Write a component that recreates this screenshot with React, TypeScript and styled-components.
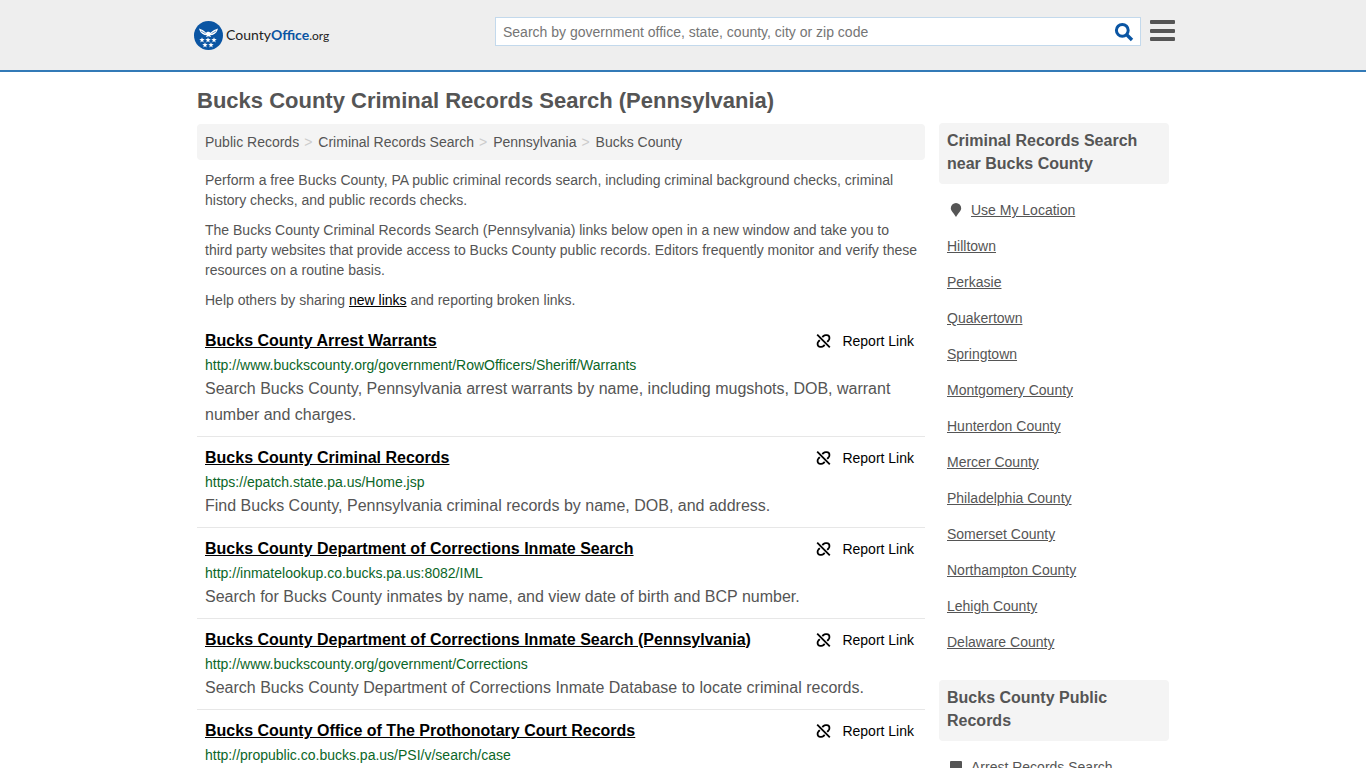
import React from "react";
import styled, { createGlobalStyle } from "styled-components";

const GlobalStyle = createGlobalStyle`
  *, *::before, *::after { box-sizing: border-box; }
  html { overflow-x: hidden; }
  body {
    margin: 0;
    background: #fff;
    color: #555;
    font-family: "Liberation Sans", Arial, Helvetica, sans-serif;
    font-size: 14px;
    line-height: 20px;
  }
  h1, h2, h3, p, ul, ol { margin: 0; padding: 0; }
  ul, ol { list-style: none; }
  a { color: inherit; }
`;

const Header = styled.header`
  background: #eee;
  border-bottom: 2px solid #337ab7;
`;

const HeaderInner = styled.div`
  display: flex;
  align-items: center;
  max-width: 986px;
  height: 70px;
  margin: 0 auto;
  padding: 0 0 8px 4px;
`;

const Brand = styled.a`
  display: flex;
  align-items: center;
  gap: 3px;
  padding-top: 8px;
  margin-right: auto;
  text-decoration: none;
`;

const BrandName = styled.span`
  font-family: Lato, "Liberation Sans", sans-serif;
  font-size: 14px;
  line-height: 20px;
  color: #222;
`;

const BrandStrong = styled.b`
  color: #0a55a3;
`;

const BrandSuffix = styled.span`
  font-size: 12px;
`;

const SearchForm = styled.form`
  display: flex;
  flex: 0 1 646px;
  height: 29px;
  margin-top: 1px;
  background: #fff;
  border: 1px solid #c3d9ec;
`;

const SearchInput = styled.input`
  flex: 1;
  min-width: 0;
  padding: 0 7px;
  border: 0;
  outline: 0;
  background: transparent;
  color: #555;
  font-family: inherit;
  font-size: 14px;
  &::placeholder { color: #757575; opacity: 1; }
`;

const IconButton = styled.button`
  display: flex;
  align-items: center;
  justify-content: center;
  padding: 0;
  border: 0;
  background: none;
  color: ${(p) => p.color};
  cursor: pointer;
`;

const SearchButton = styled(IconButton)`
  width: 32px;
`;

const MenuButton = styled(IconButton)`
  width: 26px;
  margin-left: 9px;
`;

const Page = styled.div`
  display: grid;
  grid-template-columns: minmax(0, 1fr) 230px;
  column-gap: 14px;
  max-width: 972px;
  margin: 0 auto;
`;

const PageTitle = styled.h1`
  grid-column: 1 / -1;
  padding: 14px 0 6px;
  font-size: 22px;
  line-height: 30px;
`;

const Main = styled.main`
  padding-top: 2px;
`;

const Breadcrumbs = styled.nav`
  padding: 8px;
  background: #f4f4f4;
  border-radius: 4px;
`;

const CrumbList = styled.ol`
  display: flex;
  flex-wrap: wrap;
`;

const Crumb = styled.li`
  & + &::before {
    content: ">";
    padding: 0 6px 0 5px;
    color: #ccc;
  }
`;

const CrumbLink = styled.a`
  text-decoration: none;
`;

const Intro = styled.div`
  display: flex;
  flex-direction: column;
  gap: 10px;
  padding: 10px 8px;
`;

const DarkLink = styled.a`
  color: #000;
`;

const Result = styled.li`
  padding: 8px;
  border-bottom: 1px solid #e7e7e7;
`;

const ResultHead = styled.div`
  display: flex;
  justify-content: space-between;
  align-items: center;
  padding-right: 3px;
`;

const ResultTitle = styled.h3`
  font-size: 16px;
  line-height: 26px;
`;

const ReportButton = styled.button`
  display: flex;
  align-items: center;
  gap: 11px;
  padding: 0;
  border: 0;
  background: none;
  color: #000;
  font-family: inherit;
  font-size: 14px;
  line-height: 20px;
  cursor: pointer;
`;

const ResultUrl = styled.p`
  color: #0b6627;
  line-height: 22px;
`;

const ResultText = styled.p`
  font-size: 16px;
  line-height: 26px;
`;

const Sidebar = styled.aside`
  display: flex;
  flex-direction: column;
  gap: 20px;
  padding-top: 1px;
`;

const SideTitle = styled.h2`
  margin-bottom: 8px;
  padding: 6px 8px 9px;
  background: #f4f4f4;
  border-radius: 4px;
  font-size: 16px;
  line-height: 23px;
`;

const SideItem = styled.li`
  display: flex;
  align-items: center;
  height: 36px;
  padding: 0 8px;
`;

const SideIcon = styled.span`
  display: flex;
  justify-content: center;
  width: 18px;
  margin-right: 6px;
`;

function Logo() {
  const stars = [
    [8, 19], [14, 19], [20, 19], [11, 24], [17, 24],
  ];
  return (
    <svg width="29" height="29" viewBox="0 0 29 29" aria-hidden="true">
      <circle cx="14.5" cy="14.5" r="14.5" fill="#0a55a3" />
      <path
        fill="#fff"
        d="M5 7.500C7.500 8.500 10 9.200 12 11.700L13.500 10.700H15L16.500 11.700C18.800 9.200 21.500 8.500 24 7.500 23.500 10 22 12.600 18.500 14L16 14.200 17.200 16 14.500 15.200 11.800 16 13 14.200 10.500 14C7 12.600 5.500 10 5 7.500z"
      />
      <path d="M7 10l4.500 2.600M22 10l-4.500 2.600" stroke="#0a55a3" strokeWidth=".6" />
      {stars.map(([x, y]) => (
        <path
          key={`${x}-${y}`}
          transform={`translate(${x} ${y})`}
          fill="#fff"
          d="M0-2.700.7-.9 2.700-.8 1.100.5 1.700 2.400 0 1.300-1.700 2.400-1.100.5-2.700-.8-.7-.9z"
        />
      ))}
    </svg>
  );
}

function SearchIcon() {
  return (
    <svg width="20" height="20" viewBox="0 0 20 20" fill="none" stroke="currentColor" aria-hidden="true">
      <circle cx="8.300" cy="8.300" r="5.900" strokeWidth="3" />
      <path d="M12.500 12.500l5.500 5.500" strokeWidth="3.400" />
    </svg>
  );
}

function MenuIcon() {
  return (
    <svg width="26" height="22" viewBox="0 0 26 22" fill="currentColor" aria-hidden="true">
      <rect x="0" y="0" width="25" height="4" rx="1" />
      <rect x="0" y="9" width="25" height="4" rx="1" />
      <rect x="0" y="17" width="25" height="4" rx="1" />
    </svg>
  );
}

function BrokenLinkIcon() {
  return (
    <svg width="15" height="14" viewBox="0 0 15 14" fill="none" stroke="#000" strokeWidth="1.800" aria-hidden="true">
      <path d="M1.200.700l12.600 12.600" />
      <path d="M6.300 3.200L7.500 2A3.300 3.300 0 0 1 10 1.100H10.800A2.600 2.600 0 0 1 13.400 3.700V4.200A3.300 3.300 0 0 1 12.500 6.500L11.200 7.800" />
      <path d="M8.700 10.800L7.500 12A3.300 3.300 0 0 1 5 12.900H4.200A2.600 2.600 0 0 1 1.600 10.300V9.800A3.300 3.300 0 0 1 2.500 7.500L3.800 6.200" />
    </svg>
  );
}

function PinIcon() {
  return (
    <svg width="12" height="14" viewBox="0 0 12 14" fill="#555" aria-hidden="true">
      <path d="M6 0a5.200 5.200 0 0 1 5.200 5.200C11.200 8 8 10 6 14 4 10 .8 8 .8 5.200A5.200 5.200 0 0 1 6 0z" />
    </svg>
  );
}

function BookIcon() {
  return (
    <svg width="12" height="12" viewBox="0 0 12 12" fill="#555" aria-hidden="true">
      <rect width="12" height="12" rx="1" />
    </svg>
  );
}

const crumbs = ["Public Records", "Criminal Records Search", "Pennsylvania", "Bucks County"];

const results = [
  {
    title: "Bucks County Arrest Warrants",
    url: "http://www.buckscounty.org/government/RowOfficers/Sheriff/Warrants",
    text: "Search Bucks County, Pennsylvania arrest warrants by name, including mugshots, DOB, warrant number and charges.",
  },
  {
    title: "Bucks County Criminal Records",
    url: "https://epatch.state.pa.us/Home.jsp",
    text: "Find Bucks County, Pennsylvania criminal records by name, DOB, and address.",
  },
  {
    title: "Bucks County Department of Corrections Inmate Search",
    url: "http://inmatelookup.co.bucks.pa.us:8082/IML",
    text: "Search for Bucks County inmates by name, and view date of birth and BCP number.",
  },
  {
    title: "Bucks County Department of Corrections Inmate Search (Pennsylvania)",
    url: "http://www.buckscounty.org/government/Corrections",
    text: "Search Bucks County Department of Corrections Inmate Database to locate criminal records.",
  },
  {
    title: "Bucks County Office of The Prothonotary Court Records",
    url: "http://propublic.co.bucks.pa.us/PSI/v/search/case",
    text: "",
  },
];

const places = [
  "Hilltown",
  "Perkasie",
  "Quakertown",
  "Springtown",
  "Montgomery County",
  "Hunterdon County",
  "Mercer County",
  "Philadelphia County",
  "Somerset County",
  "Northampton County",
  "Lehigh County",
  "Delaware County",
];

export default function App() {
  return (
    <>
      <GlobalStyle />
      <Header>
        <HeaderInner>
          <Brand href="#">
            <Logo />
            <BrandName>
              County<BrandStrong>Office</BrandStrong>
              <BrandSuffix>.org</BrandSuffix>
            </BrandName>
          </Brand>
          <SearchForm role="search">
            <SearchInput
              type="text"
              aria-label="Search"
              placeholder="Search by government office, state, county, city or zip code"
            />
            <SearchButton type="submit" aria-label="Submit search" color="#0a55a3">
              <SearchIcon />
            </SearchButton>
          </SearchForm>
          <MenuButton type="button" aria-label="Menu" color="#555">
            <MenuIcon />
          </MenuButton>
        </HeaderInner>
      </Header>
      <Page>
        <PageTitle>Bucks County Criminal Records Search (Pennsylvania)</PageTitle>
        <Main>
          <Breadcrumbs aria-label="Breadcrumb">
            <CrumbList>
              {crumbs.map((c) => (
                <Crumb key={c}>
                  <CrumbLink href="#">{c}</CrumbLink>
                </Crumb>
              ))}
            </CrumbList>
          </Breadcrumbs>
          <Intro>
            <p>
              Perform a free Bucks County, PA public criminal records search, including criminal
              background checks, criminal history checks, and public records checks.
            </p>
            <p>
              The Bucks County Criminal Records Search (Pennsylvania) links below open in a new
              window and take you to third party websites that provide access to Bucks County public
              records. Editors frequently monitor and verify these resources on a routine basis.
            </p>
            <p>
              Help others by sharing <DarkLink href="#">new links</DarkLink> and reporting broken
              links.
            </p>
          </Intro>
          <ul>
            {results.map((r) => (
              <Result key={r.title}>
                <ResultHead>
                  <ResultTitle>
                    <DarkLink href="#">{r.title}</DarkLink>
                  </ResultTitle>
                  <ReportButton type="button">
                    <BrokenLinkIcon />
                    Report Link
                  </ReportButton>
                </ResultHead>
                <ResultUrl>{r.url}</ResultUrl>
                {r.text && <ResultText>{r.text}</ResultText>}
              </Result>
            ))}
          </ul>
        </Main>
        <Sidebar>
          <section>
            <SideTitle>Criminal Records Search near Bucks County</SideTitle>
            <ul>
              <SideItem>
                <SideIcon>
                  <PinIcon />
                </SideIcon>
                <a href="#">Use My Location</a>
              </SideItem>
              {places.map((p) => (
                <SideItem key={p}>
                  <a href="#">{p}</a>
                </SideItem>
              ))}
            </ul>
          </section>
          <section>
            <SideTitle>Bucks County Public Records</SideTitle>
            <ul>
              <SideItem>
                <SideIcon>
                  <BookIcon />
                </SideIcon>
                <a href="#">Arrest Records Search</a>
              </SideItem>
            </ul>
          </section>
        </Sidebar>
      </Page>
    </>
  );
}
